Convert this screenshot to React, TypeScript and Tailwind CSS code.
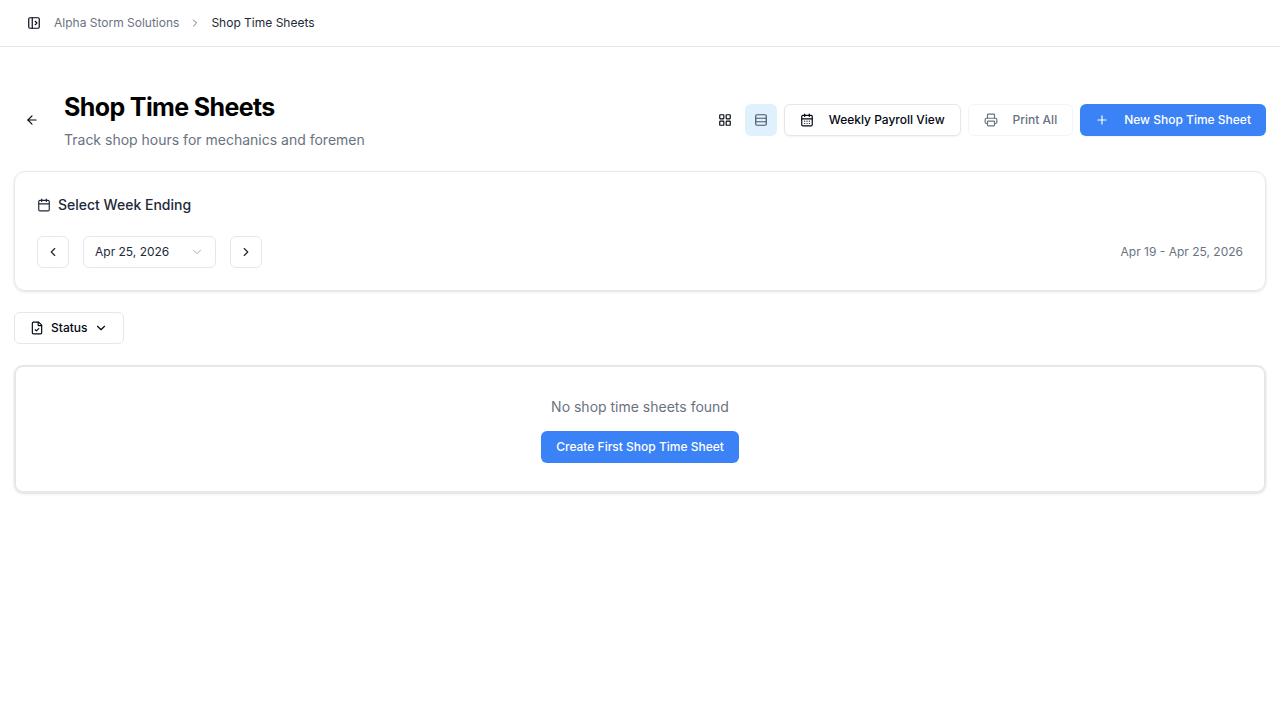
import {
  ArrowLeft,
  Calendar,
  CalendarDays,
  ChevronDown,
  ChevronLeft,
  ChevronRight,
  FileCheck,
  LayoutGrid,
  PanelLeftOpen,
  Plus,
  Printer,
  Rows3,
} from "lucide-react";
import type { ButtonHTMLAttributes } from "react";

const variants = {
  ghost: "w-8 text-gray-950",
  active: "w-8 bg-[#e0f1fe] text-gray-600",
  icon: "w-8 border border-gray-200 bg-white text-gray-800",
  outline: "border border-gray-200 bg-white px-[15px] text-gray-950",
  muted: "border border-gray-100 bg-white px-[15px] text-gray-500",
  primary: "bg-[#3b82f6] px-[15px] text-white",
};

type ButtonProps = ButtonHTMLAttributes<HTMLButtonElement> & {
  variant: keyof typeof variants;
};

function Button({ variant, className = "", ...props }: ButtonProps) {
  return (
    <button
      type="button"
      className={`flex h-8 shrink-0 items-center justify-center rounded-md text-xs font-medium ${variants[variant]} ${className}`}
      {...props}
    />
  );
}

export default function App() {
  return (
    <div className="min-h-screen bg-white font-['Inter','Liberation_Sans',sans-serif] text-gray-950">
      <header className="flex h-[47px] items-center border-b border-gray-200 pl-[18px] text-xs">
        <button type="button" aria-label="Open sidebar" className="flex h-8 w-8 items-center justify-center">
          <PanelLeftOpen size={14} />
        </button>
        <nav aria-label="Breadcrumb" className="ml-1 flex items-center gap-2.5">
          <a href="#home" className="text-gray-500">Alpha Storm Solutions</a>
          <ChevronRight size={12} className="text-gray-500" />
          <span aria-current="page" className="text-gray-800">Shop Time Sheets</span>
        </nav>
      </header>

      <main className="flex flex-col px-3.5 pt-[42px]">
        <div className="flex items-center justify-between">
          <div className="flex items-center gap-3.5">
            <button type="button" aria-label="Back" className="flex h-9 w-9 items-center justify-center">
              <ArrowLeft size={14} />
            </button>
            <div>
              <h1 className="text-[25px] leading-9 font-bold tracking-tight text-black">Shop Time Sheets</h1>
              <p className="mt-1 text-sm leading-[22px] text-gray-500">
                Track shop hours for mechanics and foremen
              </p>
            </div>
          </div>
          <div className="flex items-center gap-[7px]">
            <div className="flex items-center gap-1">
              <Button variant="ghost" aria-label="Grid view" aria-pressed={false}>
                <LayoutGrid size={14} />
              </Button>
              <Button variant="active" aria-label="List view" aria-pressed={true}>
                <Rows3 size={14} />
              </Button>
            </div>
            <Button variant="outline" className="gap-[15px] shadow-xs">
              <CalendarDays size={14} />
              Weekly Payroll View
            </Button>
            <Button variant="muted" className="gap-[15px]" disabled>
              <Printer size={14} />
              Print All
            </Button>
            <Button variant="primary" className="gap-[15px] shadow-xs">
              <Plus size={14} />
              New Shop Time Sheet
            </Button>
          </div>
        </div>

        <section className="mt-5 rounded-[11px] border border-gray-200 p-[22px] shadow-sm">
          <h2 className="flex items-center gap-[7px] text-sm leading-[22px] font-medium text-gray-800">
            <Calendar size={14} />
            Select Week Ending
          </h2>
          <div className="mt-5 flex items-center gap-3.5">
            <Button variant="icon" aria-label="Previous week">
              <ChevronLeft size={14} />
            </Button>
            <div className="relative w-[133px]">
              <select
                aria-label="Week ending"
                className="h-8 w-full appearance-none rounded-md border border-gray-200 bg-white px-[11px] text-xs text-gray-800"
              >
                <option>Apr 25, 2026</option>
              </select>
              <ChevronDown
                size={14}
                strokeWidth={1.5}
                className="pointer-events-none absolute top-[9px] right-3 text-gray-400"
              />
            </div>
            <Button variant="icon" aria-label="Next week">
              <ChevronRight size={14} />
            </Button>
            <p className="ml-auto text-xs text-gray-500">Apr 19 - Apr 25, 2026</p>
          </div>
        </section>

        <Button variant="outline" className="mt-[21px] gap-[7px] self-start">
          <FileCheck size={14} />
          Status
          <ChevronDown size={14} />
        </Button>

        <section className="mt-[21px] flex flex-col items-center rounded-[9px] border-2 border-gray-200 py-7 shadow-sm">
          <p className="text-sm leading-6 text-gray-500">No shop time sheets found</p>
          <Button variant="primary" className="mt-3">
            Create First Shop Time Sheet
          </Button>
        </section>
      </main>
    </div>
  );
}
